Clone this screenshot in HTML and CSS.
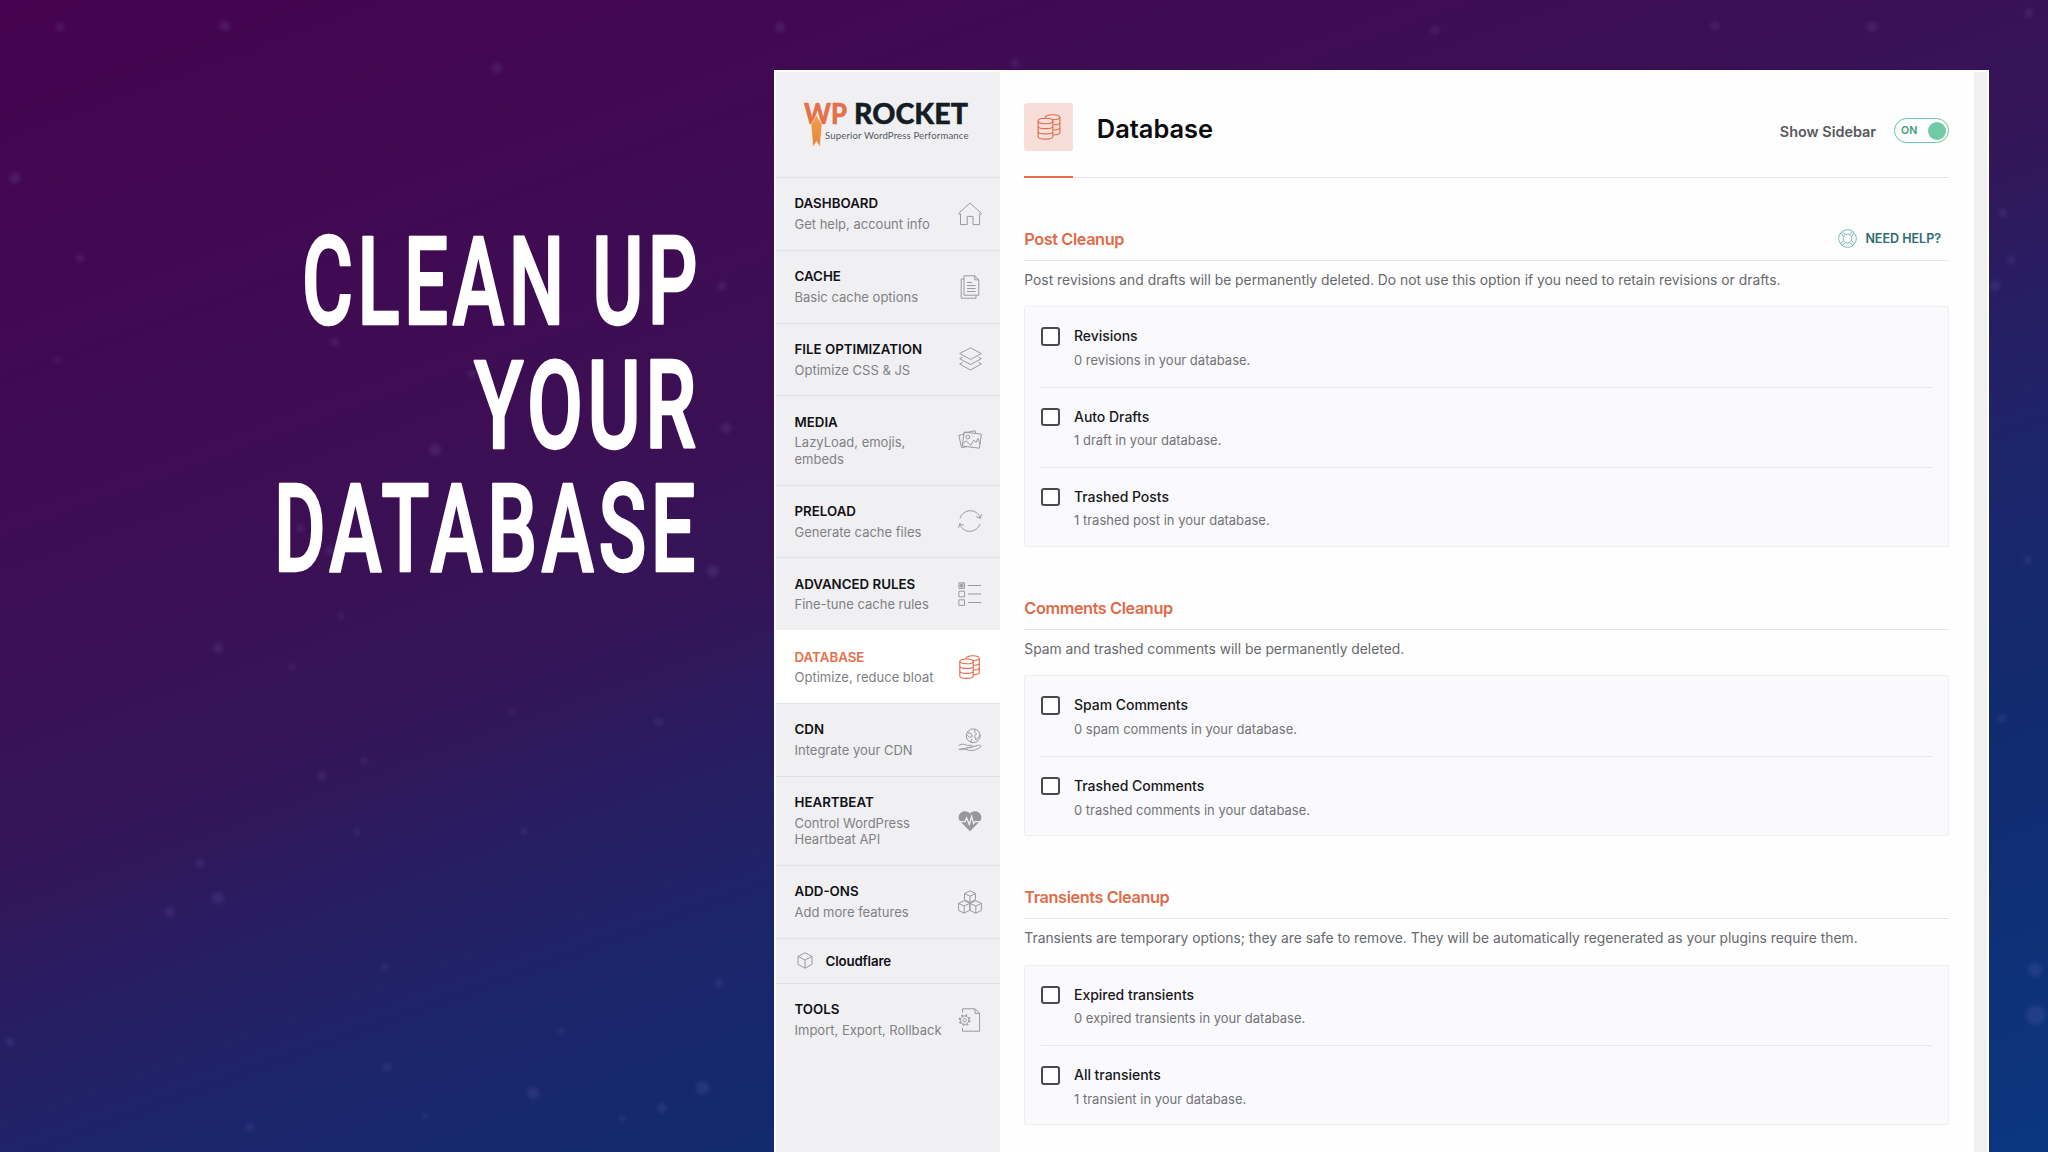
FILE: index.html
```
<!DOCTYPE html>
<html lang="en">
<head>
    <meta charset="UTF-8">
    <meta name="viewport" content="width=device-width, initial-scale=1.0">
    <title>WP Rocket - Database</title>
    <link rel="stylesheet" href="styles.css">
</head>
<body>
    <svg class="stars" viewBox="0 0 2048 1152">
        <g fill="#8a7bd0">
            <circle cx="218" cy="648" r="5"/><circle cx="292" cy="667" r="3"/><circle cx="322" cy="776" r="4"/>
            <circle cx="200" cy="863" r="4"/><circle cx="218" cy="898" r="6"/><circle cx="170" cy="912" r="5"/>
            <circle cx="357" cy="832" r="3"/><circle cx="524" cy="831" r="3"/><circle cx="364" cy="761" r="3"/>
            <circle cx="512" cy="712" r="3"/><circle cx="659" cy="722" r="4"/><circle cx="719" cy="983" r="4"/>
            <circle cx="561" cy="1031" r="3"/><circle cx="387" cy="1067" r="4"/><circle cx="533" cy="1093" r="6"/>
            <circle cx="703" cy="1088" r="7"/><circle cx="662" cy="1108" r="5"/><circle cx="622" cy="1118" r="3"/>
            <circle cx="10" cy="1042" r="4"/><circle cx="250" cy="1127" r="4"/><circle cx="425" cy="1116" r="3"/>
            <circle cx="385" cy="967" r="3"/><circle cx="341" cy="616" r="3"/><circle cx="713" cy="571" r="6"/>
            <circle cx="726" cy="428" r="5"/><circle cx="722" cy="286" r="4"/><circle cx="435" cy="450" r="6"/>
            <circle cx="472" cy="374" r="4"/><circle cx="335" cy="342" r="4"/><circle cx="300" cy="528" r="4"/>
            <circle cx="330" cy="551" r="4"/><circle cx="497" cy="68" r="5"/><circle cx="60" cy="27" r="4"/>
            <circle cx="225" cy="26" r="5"/><circle cx="780" cy="27" r="5"/><circle cx="1015" cy="63" r="4"/>
            <circle cx="1435" cy="30" r="4"/><circle cx="1715" cy="26" r="4"/><circle cx="1872" cy="27" r="5"/>
            <circle cx="2029" cy="13" r="4"/><circle cx="15" cy="178" r="6"/><circle cx="80" cy="258" r="4"/>
            <circle cx="58" cy="360" r="3"/><circle cx="2003" cy="213" r="4"/><circle cx="2011" cy="260" r="4"/>
            <circle cx="1995" cy="286" r="5"/><circle cx="2028" cy="560" r="4"/><circle cx="2002" cy="718" r="4"/>
            <circle cx="2035" cy="970" r="7"/><circle cx="2036" cy="1015" r="10"/>
        </g>
    </svg>

    <div class="page">
        <div class="headline">
            <svg width="450" height="400" viewBox="0 0 450 400">
                <text x="31" y="114.5" textLength="400" lengthAdjust="spacingAndGlyphs">CLEAN UP</text>
                <text x="203" y="238.5" textLength="227" lengthAdjust="spacingAndGlyphs">YOUR</text>
                <text x="3" y="361.5" textLength="426" lengthAdjust="spacingAndGlyphs">DATABASE</text>
            </svg>
        </div>

        <div class="window">
            <aside class="sidebar">
                <div class="logo">
                    <svg width="170" height="52" viewBox="0 0 170 52">
                        <defs>
                            <linearGradient id="flame" x1="0" y1="0" x2="0" y2="1">
                                <stop offset="0" stop-color="#f0a04f"/>
                                <stop offset="1" stop-color="#e8823f"/>
                            </linearGradient>
                        </defs>
                        <text class="logo-wp" x="1" y="23.5" textLength="43" lengthAdjust="spacingAndGlyphs">WP</text>
                        <text class="logo-rocket" x="51" y="23.5" textLength="114" lengthAdjust="spacingAndGlyphs">ROCKET</text>
                        <path d="M13.5 15L8 24.5L10 47L13.5 41.5L17 47L19 24.5Z" fill="url(#flame)" stroke="#f0f0f2" stroke-width=".6"/>
                        <text class="logo-sub" x="22" y="38.8" textLength="143.5">Superior WordPress Performance</text>
                    </svg>
                </div>
                <nav class="menu">
                    <a class="menu-item">
                        <div><h3>DASHBOARD</h3><p>Get help, account info</p></div>
                        <svg class="icon" viewBox="0 0 24 24"><path d="M1.5 12.5L.6 11.4L12 1L23.4 11.4L22.5 12.5L21.6 11.8V22.6H15V14.4H9.2V22.6H2.5V11.8Z"/></svg>
                    </a>
                    <a class="menu-item">
                        <div><h3>CACHE</h3><p>Basic cache options</p></div>
                        <svg class="icon" viewBox="0 0 24 24"><path d="M6 .8H16.8L20.8 4.8V20.2H6ZM16.8 .8V4.8H20.8M6 4H3.2V23.2H18V20.2M9 7.5H14M9 10.5H17.6M9 13.5H17.6M9 16.5H17.6"/></svg>
                    </a>
                    <a class="menu-item">
                        <div><h3>FILE OPTIMIZATION</h3><p>Optimize CSS &amp; JS</p></div>
                        <svg class="icon" viewBox="0 0 24 24"><path d="M12.5 .8L23.3 6.6L12.5 12.4L1.7 6.6ZM4.6 10L1.7 11.7L12.5 17.5L23.3 11.7L20.4 10M4.6 15.2L1.7 17L12.5 23L23.3 17L20.4 15.2"/></svg>
                    </a>
                    <a class="menu-item">
                        <div><h3>MEDIA</h3><p>LazyLoad, emojis,<br>embeds</p></div>
                        <svg class="icon" viewBox="0 0 24 24"><path d="M6.2 4L23.3 6.2L21.4 20.2L4.3 18ZM17.6 5.4L17.2 2.8L5.6 5M5.9 6.3L.8 7.3L3.6 19.6L9 18.6M5 15.5L8 12.8L12.8 17.3L15.8 12.2L18.2 14.3L20 10.5L22 16"/><circle cx="9.8" cy="9" r="1.9"/></svg>
                    </a>
                    <a class="menu-item">
                        <div><h3>PRELOAD</h3><p>Generate cache files</p></div>
                        <svg class="icon" viewBox="0 0 24 24"><path d="M2 9.5C5 -.5 19 -1 22.3 9M18.3 7.6L22.4 9.4L23.6 5.2M22 14.8C19 24.5 5 25 1.8 15M.5 18.8L1.7 14.6L5.8 16.4"/></svg>
                    </a>
                    <a class="menu-item">
                        <div><h3>ADVANCED RULES</h3><p>Fine-tune cache rules</p></div>
                        <svg class="icon" viewBox="0 0 24 24"><path d="M.9 .8H6.5V6.4H.9ZM.9 9.2H6.5V14.8H.9ZM.9 17.8H6.5V23.4H.9ZM10 3.5H23M10 12H23M10 20.5H23M2 2L5.4 5.2M5.4 2L2 5.2M3.7 1V6.2M1 3.6H6.3"/></svg>
                    </a>
                    <a class="menu-item active">
                        <div><h3>DATABASE</h3><p>Optimize, reduce bloat</p></div>
                        <svg class="icon" viewBox="0 0 24 24"><ellipse cx="8.5" cy="6.4" rx="6.7" ry="2.4"/><path d="M1.8 6.4V21C1.8 24.2 15.2 24.2 15.2 21V6.4M1.8 11.2C1.8 14.2 15.2 14.2 15.2 11.2M1.8 16C1.8 19.2 15.2 19.2 15.2 16M8 3.8C7 .2 21.3 -.4 21.3 3.2V17.6C21.3 19 18.5 19.8 15.2 19.9M21.3 3.2C21.3 5 18.5 5.7 14.5 5.5M21.3 8C21.3 9.6 18.5 10.3 15.2 10.4M21.3 12.8C21.3 14.4 18.5 15.2 15.2 15.3"/></svg>
                    </a>
                    <a class="menu-item">
                        <div><h3>CDN</h3><p>Integrate your CDN</p></div>
                        <svg class="icon" viewBox="0 0 24 24"><circle cx="15.2" cy="7.8" r="6.9"/><path d="M9.5 4.5L13 5.5L14.4 8.3L12 9.5L9 7M17 1.3L16.5 4L18.5 6L16.5 8L18 12L21 8.5L22 7M12.5 14L14 11M.8 17.5C4 15.3 7 16.6 9.5 17.4H13.5C15.5 17.6 15 19.6 13 19.6H9M14.8 18.8L20.5 17.2C23 16.8 23.6 18.4 22 19.4C18 22 14 23.4 10 22C7 21 4 21 .8 21.6Z"/></svg>
                    </a>
                    <a class="menu-item">
                        <div><h3>HEARTBEAT</h3><p>Control WordPress<br>Heartbeat API</p></div>
                        <svg class="icon" viewBox="0 0 24 24"><path class="heart" d="M12 22.3L2.3 12.6C-3.3 5.6 6.5-1.8 12 4.6C17.5-1.8 27.3 5.6 21.7 12.6Z"/><path class="pulse" d="M1.5 12.6H7L8.6 9L11.3 15.6L13.6 7.4L15.6 14.6L17 12.6H22.5"/></svg>
                    </a>
                    <a class="menu-item">
                        <div><h3>ADD-ONS</h3><p>Add more features</p></div>
                        <svg class="icon" viewBox="0 0 24 24"><path d="M12 .8L17.5 3.6V9.8L12 12.4L6.5 9.8V3.6ZM6.5 3.6L12 6.2L17.5 3.6M12 6.2V12.4M6.2 10.6L11.8 13.4V20.2L6.2 23.2L.6 20.4V13.4ZM.6 13.4L6.2 16L11.8 13.4M6.2 16V23.2M17.8 10.6L23.4 13.4V20.4L17.8 23.2L12 20.4V13.4ZM12 13.4L17.8 16L23.4 13.4M17.8 16V23.2"/></svg>
                    </a>
                    <a class="menu-sub">
                        <svg class="icon-small" viewBox="0 0 16 17"><path d="M8 .8L15 4.4V12.4L8 16.2L1 12.4V4.4ZM1 4.4L8 8L15 4.4M8 8V16.2"/></svg>
                        <span>Cloudflare</span>
                    </a>
                    <a class="menu-item">
                        <div><h3>TOOLS</h3><p>Import, Export, Rollback</p></div>
                        <svg class="icon" viewBox="0 0 24 24"><path d="M4.5 4.6V.8H17L21.6 5.4V23.2H4.5V19.8M17 .8V5.4H21.6"/><circle cx="6.6" cy="12.2" r="1.7"/><circle cx="6.6" cy="12.2" r="4.2"/><circle class="cog" cx="6.6" cy="12.2" r="5.2"/></svg>
                    </a>
                </nav>
            </aside>

            <main class="content">
                <header class="header">
                    <div class="header-icon">
                        <svg class="icon" viewBox="0 0 24 26"><ellipse cx="8.5" cy="7" rx="7.4" ry="2.7"/><path d="M1.1 7V22.6C1.1 26 15.9 26 15.9 22.6V7M1.1 12.2C1.1 15.4 15.9 15.4 15.9 12.2M1.1 17.4C1.1 20.7 15.9 20.7 15.9 17.4M8 4.2C7 0 22.9 -.4 22.9 3.2V18.6C22.9 20.2 19.5 21 15.9 21M22.9 3.2C22.9 5.2 19.5 5.9 15 5.7M22.9 8.4C22.9 10 19.5 10.8 15.9 10.8M22.9 13.6C22.9 15.2 19.5 16 15.9 16"/></svg>
                    </div>
                    <h1>Database</h1>
                    <span class="toggle-label">Show Sidebar</span>
                    <div class="toggle"><span>ON</span><i class="knob"></i></div>
                </header>

                <section class="section">
                    <div class="section-title">
                        <h2>Post Cleanup</h2>
                        <a class="help">
                            <svg viewBox="0 0 20 20"><circle cx="10" cy="10" r="9.3"/><circle cx="10" cy="10" r="4.6"/><path d="M5.6 7.8L3 4.2M7.8 5.6L4.4 3M12.2 5.6L15.6 3M14.4 7.8L17 4.2M5.6 12.2L3 15.8M7.8 14.4L4.4 17M12.2 14.4L15.6 17M14.4 12.2L17 15.8"/></svg>
                            NEED HELP?
                        </a>
                    </div>
                    <p class="description">Post revisions and drafts will be permanently deleted. Do not use this option if you need to retain revisions or drafts.</p>
                    <div class="options">
                        <div class="option"><i class="checkbox"></i><div><h4>Revisions</h4><p>0 revisions in your database.</p></div></div>
                        <div class="option"><i class="checkbox"></i><div><h4>Auto Drafts</h4><p>1 draft in your database.</p></div></div>
                        <div class="option"><i class="checkbox"></i><div><h4>Trashed Posts</h4><p>1 trashed post in your database.</p></div></div>
                    </div>
                </section>

                <section class="section">
                    <div class="section-title"><h2>Comments Cleanup</h2></div>
                    <p class="description">Spam and trashed comments will be permanently deleted.</p>
                    <div class="options">
                        <div class="option"><i class="checkbox"></i><div><h4>Spam Comments</h4><p>0 spam comments in your database.</p></div></div>
                        <div class="option"><i class="checkbox"></i><div><h4>Trashed Comments</h4><p>0 trashed comments in your database.</p></div></div>
                    </div>
                </section>

                <section class="section">
                    <div class="section-title"><h2>Transients Cleanup</h2></div>
                    <p class="description">Transients are temporary options; they are safe to remove. They will be automatically regenerated as your plugins require them.</p>
                    <div class="options">
                        <div class="option"><i class="checkbox"></i><div><h4>Expired transients</h4><p>0 expired transients in your database.</p></div></div>
                        <div class="option"><i class="checkbox"></i><div><h4>All transients</h4><p>1 transient in your database.</p></div></div>
                    </div>
                </section>
            </main>
            <div class="gutter"></div>
        </div>
    </div>
</body>
</html>
```
FILE: styles.css
```
* {
    margin: 0;
    padding: 0;
    box-sizing: border-box;
}
body {
    width: 2048px;
    height: 1152px;
    overflow: hidden;
    position: relative;
    font-family: Inter, "Liberation Sans", sans-serif;
    background: linear-gradient(160deg, #46034f 0%, #3c0f54 34%, #341558 45%, #281d62 54%, #1c256a 63%, #122a6e 75%, #0b3680 100%);
}
svg {
    display: block;
}
.stars {
    position: absolute;
    top: 0;
    left: 0;
    width: 2048px;
    height: 1152px;
    opacity: 0.16;
    filter: blur(2px);
}
.page {
    position: relative;
    display: flex;
    height: 1152px;
}

/* headline */
.headline {
    width: 774px;
    padding: 209px 0 0 271px;
}
.headline svg {
    overflow: visible;
}
.headline text {
    font-family: Roboto, sans-serif;
    font-size: 123px;
    font-weight: 500;
    letter-spacing: 7px;
    fill: #fff;
    stroke: #fff;
    stroke-width: 2.5px;
    stroke-linejoin: round;
}

/* app window */
.window {
    display: flex;
    width: 1215px;
    height: 1082px;
    margin-top: 70px;
    background: #fefefe;
    border: 2px solid #fff;
    border-bottom: none;
}
.sidebar {
    width: 224px;
    background: #f0f0f2;
}
.logo {
    height: 105px;
    padding: 28px 0 0 27px;
}
.logo svg {
    overflow: visible;
}
.logo-wp, .logo-rocket {
    font-family: Lato, sans-serif;
    font-weight: 900;
    font-size: 28px;
}
.logo-wp {
    fill: #e5704a;
    stroke: #e5704a;
    stroke-width: 0.5px;
}
.logo-rocket {
    fill: #141c24;
    stroke: #141c24;
    stroke-width: 0.4px;
}
.logo-sub {
    font-family: Lato, sans-serif;
    font-size: 9.6px;
    fill: #55585e;
}
.menu-item {
    display: flex;
    justify-content: space-between;
    align-items: center;
    padding: 15.3px 18px 17.65px 18.5px;
    border-top: 1px solid #e1e2e6;
}
.menu-item h3 {
    font-size: 13.3px;
    font-weight: 600;
    line-height: 20px;
    margin-bottom: 2.6px;
    color: #121116;
}
.menu-item p {
    font-size: 13px;
    line-height: 16.3px;
    color: #808084;
    white-space: nowrap;
}
.icon {
    width: 24px;
    height: 24px;
    flex-shrink: 0;
    fill: none;
    stroke: #9a9a9f;
    stroke-width: 1;
}
.menu-item .icon {
    margin-top: 2px;
}
.icon .heart {
    fill: #98989b;
    stroke: none;
}
.icon .pulse {
    stroke: #f0f0f2;
    stroke-width: 1.3;
}
.icon .cog {
    stroke-width: 1.4;
    stroke-dasharray: 2 2.08;
}
.active {
    background: #fff;
    border-color: #fff;
}
.active h3 {
    color: #e5704a;
}
.active .icon, .header-icon .icon {
    stroke: #e2694a;
    stroke-width: 1.1;
}
.menu-sub {
    display: flex;
    align-items: center;
    gap: 13px;
    height: 45px;
    padding-left: 20.5px;
    border-top: 1px solid #e1e2e6;
    font-size: 13.3px;
    font-weight: 600;
    letter-spacing: -0.15px;
    color: #121116;
}
.icon-small {
    width: 16px;
    height: 17px;
    fill: none;
    stroke: #9a9a9f;
}

/* content */
.content {
    width: 974px;
    padding: 0 25px 0 24.3px;
}
.gutter {
    flex: 1;
    background: #f0f0f2;
}
.header {
    position: relative;
    display: flex;
    align-items: center;
    height: 106px;
    padding-top: 4px;
    border-bottom: 1px solid #e6e6ea;
}
.header::after {
    content: "";
    position: absolute;
    left: 0;
    bottom: -1px;
    width: 48.5px;
    height: 2px;
    background: #e5704a;
}
.header-icon {
    display: flex;
    align-items: center;
    justify-content: center;
    width: 48.5px;
    height: 48.5px;
    margin-top: 1px;
    background: #f8ded8;
    border-radius: 3px;
}
.header-icon .icon {
    width: 24px;
    height: 26px;
}
.header h1 {
    margin: 4px auto 0 24px;
    font-size: 25.4px;
    font-weight: 600;
    color: #0b0b0e;
}
.toggle-label {
    margin: 9px 18px 0 0;
    font-size: 14.4px;
    font-weight: 600;
    color: #58585d;
}
.toggle {
    display: flex;
    align-items: center;
    justify-content: space-between;
    width: 55px;
    height: 24.5px;
    margin-top: 8px;
    padding: 0 2.5px 0 6px;
    border: 1px solid #6fc6a2;
    border-radius: 13px;
    font-size: 10.6px;
    font-weight: 600;
    color: #459a73;
}
.knob {
    width: 18px;
    height: 18px;
    border-radius: 50%;
    background: #6fcaa5;
}
.section {
    padding-top: 49.2px;
}
.section-title {
    display: flex;
    justify-content: space-between;
    height: 34px;
    border-bottom: 1px solid #e6e6ea;
}
.section-title h2 {
    font-size: 16.3px;
    font-weight: 600;
    line-height: 24px;
    letter-spacing: -0.41px;
    color: #dd6c49;
}
.help {
    display: flex;
    align-items: center;
    gap: 8px;
    height: 22px;
    padding-right: 8px;
    font-size: 12.5px;
    font-weight: 600;
    color: #2d6a72;
}
.help svg {
    width: 19px;
    height: 19px;
    fill: none;
    stroke: #74b3b8;
}
.description {
    margin: 9px 0 16.2px;
    font-size: 13.85px;
    line-height: 20px;
    color: #68686d;
}
.options {
    padding: 0 16.2px;
    background: #fafafc;
    border: 1px solid #eeeff2;
    border-radius: 2px;
}
.option {
    display: flex;
    gap: 14px;
    height: 80px;
    padding-top: 20px;
    border-top: 1px solid #e6e7ea;
}
.option:first-child {
    height: 79.5px;
    border-top: none;
}
.option:last-child {
    height: 79.2px;
}
.checkbox {
    width: 18.5px;
    height: 18.5px;
    border: 2px solid #4a4a4e;
    border-radius: 3px;
    background: #fff;
}
.option h4 {
    margin: -2px 0 2.6px;
    font-size: 14px;
    font-weight: 500;
    line-height: 22px;
    letter-spacing: -0.03px;
    color: #18181b;
}
.option p {
    font-size: 13px;
    line-height: 20px;
    color: #727277;
}
```
